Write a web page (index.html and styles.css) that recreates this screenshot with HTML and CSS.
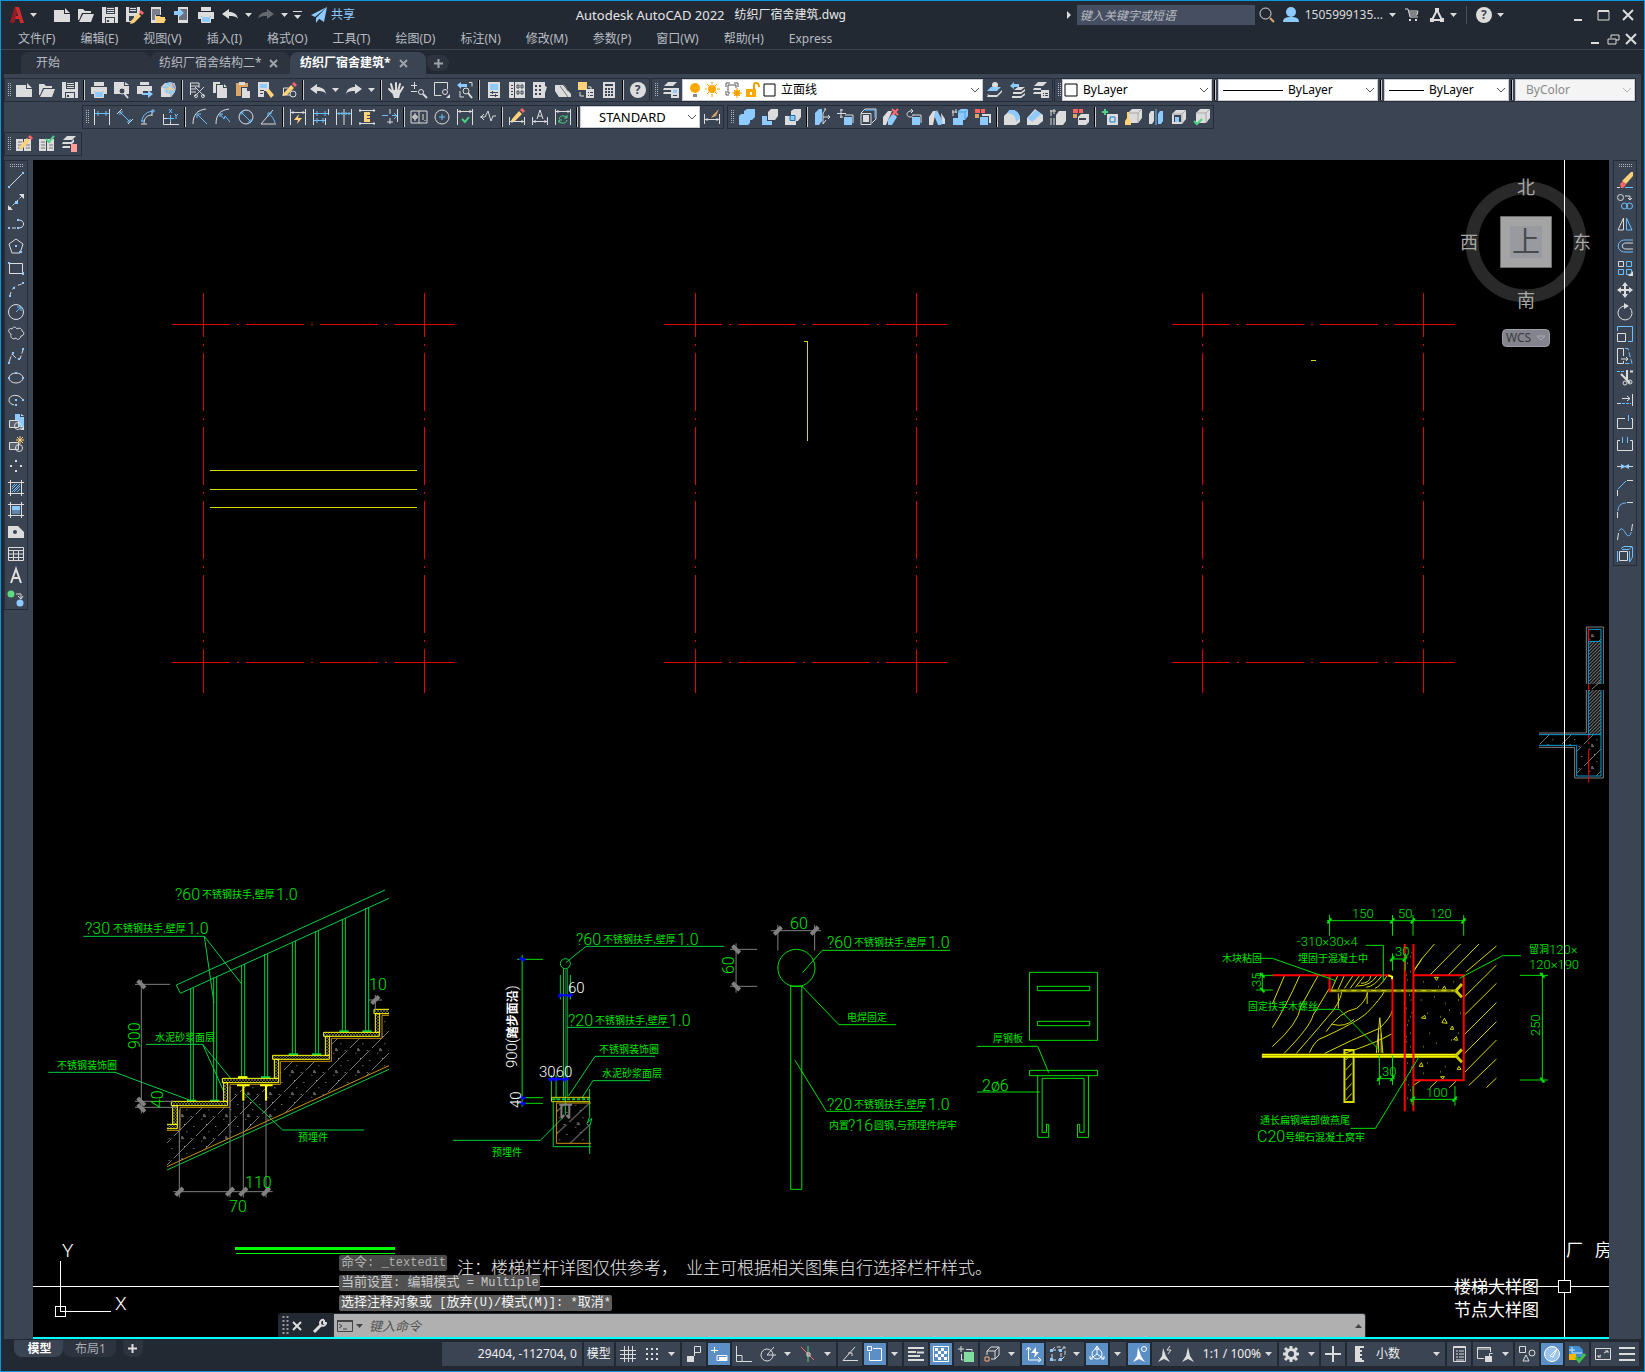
FILE: index.html
```html
<!DOCTYPE html>
<html lang="zh-CN">
<head>
<meta charset="utf-8">
<title>Autodesk AutoCAD 2022 纺织厂宿舍建筑.dwg</title>
<link rel="stylesheet" href="styles.css">
</head>
<body>
<svg class="defs" width="0" height="0" aria-hidden="true">
<defs>
<symbol id="new"><path class="fw" d="M0 3h10v4h6v8H0zM11 1l5 5h-5z"/></symbol>
<symbol id="open"><path class="fw" d="M0 2h5l2 2h6v2H4L1 13H0zM5 7h11l-3 8H1z"/></symbol>
<symbol id="save"><path class="fw" d="M0 0h16v16H0z"/><path class="dk" d="M4 0h9v7H4zM3 10h10v6H3z"/><path class="fw" d="M5 1h7v1H5zM5 3h7v1H5zM5 5h7v1H5zM4 11h8v5H4z"/><path class="dk" d="M5 13h2v2H5z"/></symbol>
<symbol id="print"><path class="fw" d="M3 0h10v4H3zM0 5h16v7h-3V9H3v3H0z"/><path class="fb" d="M4 10h8v5H4z"/><path d="M3.500 9.500h9v6h-9z"/></symbol>
<symbol id="undo"><path class="fw" d="M0 7l7-5v3c5 0 8 2 9 7-2-3-5-3-9-3v3z"/></symbol>
<symbol id="redo"><path class="fw" d="M16 7L9 2v3C4 5 1 7 0 12c2-3 5-3 9-3v3z"/></symbol>
<symbol id="caret"><path class="fw" d="M0 0h7L3.500 4z"/></symbol>
<symbol id="chev"><path d="M1 1l4 4 4-4" stroke="#555"/></symbol>
<symbol id="pencil"><path class="fy" d="M1 11l7-8 3 3-7 7-4 1z"/><path class="fr" d="M9 2l2-2 3 3-2 2z"/></symbol>
<symbol id="cube"><path class="fw" d="M1 5l4-4h10v9l-4 5H1z"/><path d="M1 5h10v10M11 5l4-4" stroke="#a8a8a8"/></symbol>
<symbol id="x"><path d="M1 1l10 10M11 1L1 11" stroke-width="2"/></symbol>
<pattern id="concrete" width="66" height="66" patternUnits="userSpaceOnUse"><path d="M-4 70L70-4M-37 37L37-37M29 103L103 29" stroke="#747474" stroke-width="3" fill="none" stroke-dasharray="80 10"/><path d="M10 20h3v3h-3zM52 42h3v3h-3zM31 58h3v3h-3zM44 12h3v3h-3zM24 36h3v3h-3z" fill="#999" stroke="none"/><path d="M18 6l6 8h-8z" stroke="#777" stroke-width="2" fill="#555"/></pattern>
<pattern id="mortar" width="9" height="9" patternUnits="userSpaceOnUse"><path d="M0 9L9 0M0 0l9 9" stroke="#77775c" stroke-width="2"/></pattern>
<pattern id="fine" width="10" height="10" patternUnits="userSpaceOnUse"><path d="M-2 12L12-2M-2 2L2-2M8 12l4-4" stroke="#8c8c8c" stroke-width="3"/></pattern>
</defs>
</svg>

<header>
<div class="titlebar">
<div class="quick">
<button class="logo" aria-label="应用程序菜单"><svg class="i"><path d="M1 16L6 0h4l5 16h-4l-1-4H6l-1 4zM7 9h2L8 4z" fill="#d12a2f" stroke="none"/><path d="M1 16L6 0l2 4-3 12z" fill="#8e1c20" stroke="none"/></svg><svg class="caret"><use href="#caret"/></svg></button>
<button aria-label="新建"><svg class="i"><use href="#new"/></svg></button>
<button aria-label="打开"><svg class="i"><use href="#open"/></svg></button>
<button aria-label="保存"><svg class="i"><use href="#save"/></svg></button>
<button aria-label="另存为"><svg class="i"><path class="fw" d="M0 0h14v6l-6 7v2H0z"/><path class="dk" d="M3 0h8v6H3zM3 9h5v5H3z"/><path class="fw" d="M4 1h6v1H4zM4 3h6v1H4z"/><use href="#pencil" x="4" y="3"/></svg></button>
<button aria-label="从移动设备打开"><svg class="i"><path class="fw" d="M1 0h10v8H6v8H1z"/><path class="dk" d="M2 2h8v6H5v5H2z" fill-opacity=".6"/><path class="fy" d="M6 9h4l1 1h4v2h-5l-2 4H6zM10 12h6l-2 4H8z"/></svg></button>
<button aria-label="保存到移动设备"><svg class="i"><path class="fw" d="M4 0h10v16H4z"/><path class="dk" d="M5 2h8v11H5z" fill-opacity=".7"/><path class="fb" d="M0 4h5V1l5 5-5 4V8H0z"/></svg></button>
<button aria-label="打印"><svg class="i"><use href="#print"/></svg></button>
<button aria-label="放弃"><svg class="i"><use href="#undo"/></svg></button>
<button class="drop" aria-label="放弃列表"><svg class="caret"><use href="#caret"/></svg></button>
<button class="dim" aria-label="重做"><svg class="i"><use href="#redo"/></svg></button>
<button class="drop" aria-label="重做列表"><svg class="caret"><use href="#caret"/></svg></button>
<button class="custom" aria-label="自定义快速访问工具栏"><svg class="more"><path class="fw" d="M0 0h9v1H0zM1 4h7L4.500 8z"/></svg></button>
<button class="share"><svg class="i"><path class="fb" d="M16 0L0 8l4 2zM16 0L5 11v5l3-4zM16 0L7 11l6 4z"/></svg>共享</button>
</div>
<h1><span class="app">Autodesk AutoCAD 2022</span><span>纺织厂宿舍建筑.dwg</span></h1>
<div class="account">
<svg class="play"><path class="fw" d="M0 0l4 4-4 4z"/></svg>
<input type="search" aria-label="搜索" placeholder="键入关键字或短语">
<button aria-label="搜索"><svg class="i"><circle cx="6.500" cy="6.500" r="5.500"/><path d="M11 11l4 4" stroke="#d9a566" stroke-width="2"/></svg></button>
<button class="user"><svg class="i"><circle class="fb" cx="8" cy="5" r="5"/><path class="fb" d="M0 15c0-4 3-5 8-5s8 1 8 5z"/></svg>1505999135...<svg class="caret"><use href="#caret"/></svg></button>
<button class="cart" aria-label="应用商店"><svg class="i"><path d="M1 2h3l2 8h8M5 4h9l-1 4H6M5 6h9"/><path class="fw" d="M5 12h2v2H5zM11 12h2v2h-2z"/></svg></button>
<button class="wide" aria-label="保持连接"><svg class="i"><path d="M8 3L3 13h10zM8 3v1" stroke-width="2"/><path class="fw" d="M6 1h4v4H6zM1 11h4v4H1zM11 11h4v4h-4z"/></svg><svg class="caret"><use href="#caret"/></svg></button>
<span class="rule"></span>
<button class="wide" aria-label="帮助"><span class="help">?</span><svg class="caret"><use href="#caret"/></svg></button>
<div class="winctl">
<button aria-label="最小化"><svg><path d="M2 11h8" stroke-width="2"/></svg></button>
<button aria-label="最大化"><svg><path d="M1 2h11M1 2v9h11V2" stroke-width="1"/><path d="M1 2h11" stroke-width="2"/></svg></button>
<button aria-label="关闭"><svg><use href="#x"/></svg></button>
</div>
</div>
</div>
<nav class="menubar" aria-label="菜单">
<a href="#">文件(F)</a><a href="#">编辑(E)</a><a href="#">视图(V)</a><a href="#">插入(I)</a><a href="#">格式(O)</a><a href="#">工具(T)</a><a href="#">绘图(D)</a><a href="#">标注(N)</a><a href="#">修改(M)</a><a href="#">参数(P)</a><a href="#">窗口(W)</a><a href="#">帮助(H)</a><a href="#">Express</a>
<div class="docctl">
<button aria-label="最小化文档"><svg><path d="M2 10h8" stroke-width="2"/></svg></button>
<button aria-label="还原文档"><svg><path d="M1 6h8v5H1zM4 5V2h8v5H9"/></svg></button>
<button aria-label="关闭文档"><svg><use href="#x"/></svg></button>
</div>
</nav>
<div class="filetabs">
<div class="tab start"><button>开始</button></div>
<div class="tab"><button>纺织厂宿舍结构二*</button><button class="close" aria-label="关闭"><svg><path d="M1 1l7 7M8 1L1 8" stroke-width="2"/></svg></button></div>
<div class="tab on"><button>纺织厂宿舍建筑*</button><button class="close" aria-label="关闭"><svg><path d="M1 1l7 7M8 1L1 8" stroke-width="2"/></svg></button></div>
<button class="add" aria-label="新图形"><svg><path d="M4.500 0v9M0 4.500h9" stroke-width="2"/></svg></button>
</div>
</header>

<section class="bars">
<div class="barrow">
<div class="bar">
<i class="grip"></i>
<button aria-label="新建"><svg class="i"><use href="#new"/></svg></button>
<button aria-label="打开"><svg class="i"><use href="#open"/></svg></button>
<button aria-label="保存"><svg class="i"><use href="#save"/></svg></button>
<i class="sep"></i>
<button aria-label="打印"><svg class="i"><use href="#print"/></svg></button>
<button aria-label="预览"><svg class="i"><path class="fw" d="M0 0h10v4h5v8H0zM11 0l4 3h-4z"/><circle cx="8" cy="9" r="3" fill="#3b4453"/><path d="M10 11l4 5" stroke-width="2"/></svg></button>
<button aria-label="发布"><svg class="i"><path class="fw" d="M3 0h9v3H3zM0 4h15v5H6v3H0z"/><path class="fb" d="M5 11h6V8l5 4-5 4v-3H5z"/></svg></button>
<button aria-label="三维打印"><svg class="i"><use href="#cube"/><circle class="fb" cx="10" cy="6" r="6"/><path d="M6 3l8 6M12 1L8 11M4 7h11" stroke="#ffd27a"/><path d="M12 1l3 6" stroke="#f66"/></svg></button>
<i class="sep"></i>
<button aria-label="剪切"><svg class="i"><path d="M1 1h9M1 4h9M1 7h6M1 10h6M1.500 1v12M10 1v5"/><path d="M6 5l9 9M15 5l-9 9"/><circle cx="7" cy="14" r="1.500"/><circle cx="14" cy="14" r="1.500"/></svg></button>
<button aria-label="复制"><svg class="i"><path class="fw" d="M1 0h7v2H4v9H1zM5 3h6v3h4v10H5zM12 2l3 3h-3z"/></svg></button>
<button aria-label="粘贴"><svg class="i"><path class="fo" d="M1 1h12v4H6v9H1z"/><path class="fw" d="M4 0h6v3H4zM7 6h5v3h3v7H7z"/></svg></button>
<button aria-label="特性匹配"><svg class="i"><path class="fw" d="M0 0h11v9H6v6H0z"/><path class="fb" d="M2 2h7v4H2z"/><path class="dk" d="M2 8h4v1H2zM2 11h3v1H2z"/><path class="fy" d="M8 9l3-2 5 6-3 3z"/></svg></button>
<button aria-label="块编辑器"><svg class="i"><path d="M1 13h8M2.500 13V6h5"/><circle cx="12" cy="12" r="3"/><use href="#pencil" x="2" y="0"/></svg></button>
<i class="sep"></i>
<button aria-label="放弃"><svg class="i"><use href="#undo"/></svg></button>
<button class="drop" aria-label="放弃列表"><svg class="caret"><use href="#caret"/></svg></button>
<button aria-label="重做"><svg class="i"><use href="#redo"/></svg></button>
<button class="drop" aria-label="重做列表"><svg class="caret"><use href="#caret"/></svg></button>
<i class="sep"></i>
<button aria-label="平移"><svg class="i"><path d="M4 10L1 7M5 9L3 2M8 8V1M10 9l2-7M12 10l3-5" stroke-width="2" stroke-linecap="round"/><path class="fw" d="M3 8h10l-2 8H6z"/></svg></button>
<button aria-label="实时缩放"><svg class="i"><path d="M0 3.500h6M3.500 0v7M0 9.500h6"/><circle cx="10" cy="10" r="2.500"/><path d="M12 12l4 4" stroke-width="2"/></svg></button>
<button aria-label="窗口缩放"><svg class="i"><path d="M.5.500h13v7M.5.500v13h7"/><circle cx="11" cy="10" r="2.500"/><path class="fw" d="M16 12v4h-4z"/></svg></button>
<button aria-label="缩放上一个"><svg class="i"><path class="fb" d="M0 3l4-3v2h6v3H4v2z"/><path d="M12 .5h3v4M3 9v6h4"/><circle cx="9" cy="9" r="3"/><path d="M11 11l4 5" stroke-width="2"/></svg></button>
<i class="sep"></i>
<button aria-label="特性"><svg class="i"><path class="fw" d="M2 0h12v16H2z"/><path class="fb" d="M4 2h8v6H4z"/><path class="dk" d="M4 10h8v1H4zM4 13h8v1H4zM6 9h1v3H6zM9 12h1v3H9z"/></svg></button>
<button aria-label="设计中心"><svg class="i"><path class="fw" d="M0 0h16v16H0z"/><path class="dk" d="M5 0h1v16H5zM2 3h2v1H2zM2 6h2v1H2zM2 9h2v1H2zM2 12h2v1H2z"/><path d="M8 3h2v3H8zM12 3h2v3h-2zM8 9h2v3H8zM12 9h2v3h-2z" stroke="#3b4453"/></svg></button>
<button aria-label="工具选项板"><svg class="i"><path class="fw" d="M1 0h12v4l2 1-2 6v5H1z"/><path class="dk" d="M3 3h2v2H3zM7 3h2v2H7zM3 7h2v2H3zM7 7h2v2H7zM3 11h2v2H3zM7 11h2v2H7z"/></svg></button>
<button aria-label="图纸集"><svg class="i"><path class="fw" d="M0 3h8l8 9v3H4L0 9z"/><path d="M5 4l8 11M8 3c4 0 2 4 5 6" stroke="#777"/></svg></button>
<button aria-label="标记集"><svg class="i"><path class="fy" d="M0 0h9v8H0z"/><path d="M2 10v4h4M10 5h3v3"/><path class="fw" d="M8 7h8v9H8z"/><path class="dk" d="M10 10h1v1h-1zM12 10h3v1h-3zM10 13h1v1h-1zM12 13h3v1h-3z"/></svg></button>
<button aria-label="计算器"><svg class="i"><path class="fw" d="M2 0h12v16H2z"/><path class="dk" d="M4 2h8v2H4zM4 6h2v2H4zM7 6h2v2H7zM10 6h2v2h-2zM4 9h2v2H4zM7 9h2v2H7zM10 9h2v2h-2zM4 12h2v2H4zM7 12h2v2H7zM10 12h2v2h-2z"/></svg></button>
<i class="sep"></i>
<button aria-label="帮助"><span class="help">?</span></button>
</div>
<div class="bar">
<i class="grip"></i>
<button aria-label="图层特性"><svg class="i"><path class="fw" d="M5 0h9l-4 4H1zM1 6h7v2H0zM1 10h7v2H0zM8 6h8v10H8z"/><path class="fb" d="M10 8h4v3h-4z"/><path class="dk" d="M10 13h4v1h-4z"/></svg></button>
<label class="combo layer"><svg class="lay" aria-hidden="true"><circle cx="8" cy="6" r="5" fill="#ffa800"/><path d="M6 12h4v3H6z" fill="#888"/><circle cx="25" cy="7" r="4" fill="#ffa800"/><path d="M25 0v2M25 12v3M18 7h2M30 7h3M20 2l2 2M28 10l2 2M30 2l-2 2M22 10l-2 2" stroke="#ffa800"/><path d="M39 5V1h4M47 1h4v4M39 9v4h3M41 3h8v3M41 3v8h2" stroke="#555"/><circle cx="50" cy="11" r="3" fill="#ffa800"/><path d="M50 6v10M45 11h10M47 8l6 6M53 8l-6 6" stroke="#ffa800"/><path d="M59 7h10v8H59z" fill="#ffa800"/><path d="M67 7V3q0-2 2-2 3 0 3 4" stroke="#e09600" stroke-width="2"/><path d="M63 10h2v3h-2z" fill="#fff"/><path d="M77 2h11v12H77z" stroke="#000" stroke-width="1"/></svg><select aria-label="图层"><option>立面线</option></select><svg class="cv"><use href="#chev"/></svg></label>
<button aria-label="置为当前图层"><svg class="i"><circle class="fw" cx="8" cy="3" r="3"/><path class="fb" d="M4 5h10l-4 4H0z"/><path class="fw" d="M2 11l-2 2h10l5-5v2l-5 5H0"/></svg></button>
<button aria-label="上一个图层"><svg class="i"><path class="fb" d="M0 4l4-4v2h5v3H4v2z"/><path class="fw" d="M8 5h7l-4 3H4zM3 10h8l4-3v2l-4 3H3zM2 14h9l4-3v2l-4 3H2z"/></svg></button>
<button aria-label="图层状态"><svg class="i"><path class="fw" d="M5 0h9l-4 4H1zM1 6h7v2H0zM1 10h7v2H0zM8 8h8v8H8z"/><path class="dk" d="M10 11h1v1h-1zM12 11h3v1h-3zM10 13h1v1h-1zM12 13h3v1h-3z"/></svg></button>
</div>
<div class="bar grow">
<i class="grip"></i>
<label class="combo c1"><svg class="sw"><path d="M1 2h12v12H1z" stroke="#000"/></svg><select aria-label="颜色"><option>ByLayer</option></select><svg class="cv"><use href="#chev"/></svg></label>
<i class="sep"></i>
<label class="combo c2"><svg class="ln"><path d="M0 8.500h60" stroke="#000"/></svg><select aria-label="线型"><option>ByLayer</option></select><svg class="cv"><use href="#chev"/></svg></label>
<i class="sep"></i>
<label class="combo c3"><svg class="ln short"><path d="M0 8.500h35" stroke="#000"/></svg><select aria-label="线宽"><option>ByLayer</option></select><svg class="cv"><use href="#chev"/></svg></label>
<i class="sep"></i>
<label class="combo c4 off"><select aria-label="打印样式" disabled><option>ByColor</option></select><svg class="cv"><use href="#chev"/></svg></label>
</div>
</div>

<div class="barrow second">
<div class="bar">
<i class="grip"></i>
<button aria-label="线性"><svg class="i"><path d="M.5 0v16M15.500 0v16"/><path class="b" d="M1 4.500h14M4 2v5M12 2v5"/></svg></button>
<button aria-label="对齐"><svg class="i"><path d="M0 5l5-5M11 15l5-5"/><path class="b" d="M3 3l10 10M3 3h3M3 3v3M13 13h-3M13 13v-3"/></svg></button>
<button aria-label="弧长"><svg class="i"><path d="M1 15h6M12 1v6M4 15C4 9 7 6 12 6"/><path class="b" d="M2 13C2 6 7 2 15 2M1 12h3M13 0v4"/></svg></button>
<button aria-label="坐标"><svg class="i"><path d="M.5 5v10.500H16M1 9.500h9M7.500 8v7"/><path class="b" d="M7.500 6v7M4 9.500h7M6 0l3 4M9 0L6 4M12 5l1 2 2-2M13 7v3"/></svg></button>
<i class="sep"></i>
<button aria-label="半径"><svg class="i"><path d="M14 0C5 1 1 6 1 15"/><path class="b" d="M6 6l9 9M5 5h4M5 5v4"/></svg></button>
<button aria-label="折弯"><svg class="i"><path d="M14 0C5 1 1 6 1 15"/><path class="b" d="M5 5l4 5 1-3 5 6M5 5h3M5 5v3"/></svg></button>
<button aria-label="直径"><svg class="i"><circle cx="8" cy="8" r="7"/><path class="b" d="M3 3l10 10M3 3h3M3 3v3M13 13h-3M13 13v-3"/></svg></button>
<button aria-label="角度"><svg class="i"><path d="M12 1L0 15h15"/><path class="b" d="M8 5c3 2 5 5 6 9M7 8V4h4"/></svg></button>
<i class="sep"></i>
<button aria-label="快速标注"><svg class="i"><path d="M.5 0v16M15.500 0v16M1 3.500h14M3 2v3M13 2v3"/><path class="fy" d="M9 5l-5 6h4l-1 4 5-6H8z"/></svg></button>
<button aria-label="基线"><svg class="i"><path d="M.5 0v16M15.500 0v6M12.500 9v7"/><path class="b" d="M1 4.500h14M1 11.500h11M4 2v5M12 2v5M4 9v5M10 9v5"/></svg></button>
<button aria-label="连续"><svg class="i"><path d="M.5 0v16M8 0v16M15.500 0v16"/><path class="b" d="M1 4.500h14M3 3v3M6 3v3M10 3v3M13 3v3"/></svg></button>
<button aria-label="等距标注"><svg class="i"><path d="M0 1.500h16M0 14.500h16M1 0v3M15 0v3M1 13v3M15 13v3"/><path d="M5 3h6v3H8v1h3v2H8v1h3v3H5z" class="fy"/></svg></button>
<button aria-label="标注打断"><svg class="i"><path d="M8 0v5M8 9v6M5 13h6"/><path class="b" d="M0 6.500h6M10 6.500h6M12 4l3 3-3 3"/><path d="M15.500 0v13"/></svg></button>
<i class="sep"></i>
<button aria-label="公差"><svg class="i"><path d="M0 2h16v12H0zM8 2v12M4 4v8M1 8h6M12 5v6M14 11v1"/><circle cx="4" cy="8" r="2"/></svg></button>
<button aria-label="圆心标记"><svg class="i"><circle cx="8" cy="8" r="7"/><path class="b" d="M8 5v6M5 8h6"/></svg></button>
<button aria-label="检验"><svg class="i"><path d="M.5 0v16M15.500 0v16M1 2.500h14M3 1v3M13 1v3"/><path d="M5 10l3 3 4-5" stroke="#4bd383" stroke-width="2"/></svg></button>
<button aria-label="折弯线性"><svg class="i"><path d="M0 8h5l3-6 3 10 2-5h3M4 5L1 8l3 3"/></svg></button>
<i class="sep"></i>
<button aria-label="编辑标注"><svg class="i"><path d="M.5 8v8M15.500 8v8M1 12.500h14M3 11v3M13 11v3"/><use href="#pencil" x="2" y="-1"/></svg></button>
<button aria-label="编辑标注文字"><svg class="i"><path d="M.5 8v8M15.500 8v8M1 12.500h14M3 11v3M13 11v3M5 10l3-9 3 9M6 7h4"/></svg></button>
<button aria-label="标注更新"><svg class="i"><path d="M.5 0v16M15.500 0v16M1 2.500h14M3 1v3M13 1v3"/><path d="M4 10c1-4 6-4 8-1M12 11c-1 4-6 4-8 1M12 6v3H9M4 14v-3h3" stroke="#4bd383"/></svg></button>
<i class="sep"></i>
<label class="combo std"><select aria-label="标注样式"><option>STANDARD</option></select><svg class="cv"><use href="#chev"/></svg></label>
<button aria-label="标注样式管理"><svg class="i"><path d="M.5 5v10M15.500 5v10M1 10.500h14M3 9v3M13 9v3"/><path class="fo" d="M9 6l6-6-3 7-5 2z"/></svg></button>
</div>
<div class="bar">
<i class="grip"></i>
<button aria-label="并集"><svg class="i"><path class="fb" d="M0 7l2-2h3V2l3-2h8v8l-3 3h-2v3l-2 2H0z"/></svg></button>
<button aria-label="差集"><svg class="i"><path class="fb" d="M0 7h5v5h5v4H0z"/><path class="fw" d="M6 3l3-3h7v7l-3 4H6z"/></svg></button>
<button aria-label="交集"><svg class="i"><path class="fw" d="M6 2l3-2h7v8l-3 4h-2v4H0V7h6z"/><path d="M5 6.500h5v5H5z" fill="#8ccaff" stroke="#1d6ea8"/></svg></button>
<i class="sep"></i>
<button aria-label="拉伸面"><svg class="i"><path class="fb" d="M1 4l4-4h3v12l-3 4H1z"/><path d="M10 0h2L9 4v11l3-4M9 8h7M14 6l2 2-2 2"/></svg></button>
<button aria-label="移动面"><svg class="i"><path d="M4 0v9M0 4.500h9M3 1h3M3 8h3"/><path class="fb" d="M7 8h8v8H7z"/><path d="M8 6h8v8"/></svg></button>
<button aria-label="偏移面"><svg class="i"><path d="M1 4.500h10v11H1zM1 4l4-4h11v10l-4 4"/><path class="fw" d="M3 6h6v7H3z"/><path class="b" d="M5 1h10v8"/></svg></button>
<button aria-label="删除面"><svg class="i"><path class="fw" d="M0 8l5-6h4L3 16H0z"/><path class="fb" d="M5 11l5-7 4 4-5 8H5z"/><path d="M9 0l6 6M15 0L9 6" stroke="#ff6a6a" stroke-width="2"/></svg></button>
<button aria-label="旋转面"><svg class="i"><path d="M6 2H4C0 3 0 8 4 8c3 0 3-2 3-3M5 0l2 2-2 2"/><path class="fb" d="M6 8h8v8H6z"/><path d="M7 6h8v8"/></svg></button>
<button aria-label="倾斜面"><svg class="i"><path class="fw" d="M0 8l4-6h3L4 16H0zM12 4l4 6v5h-3z"/><path class="fb" d="M5 6l3-5 6 12-2 3H9z"/></svg></button>
<button aria-label="复制面"><svg class="i"><path d="M4 0v4M0 3h5M1 1v6"/><path class="fb" d="M1 9h10v7H1zM6 2l3-2h7v7l-3 4H6z"/><path d="M6 3h7v7M13 3l3-3" stroke="#4b9bd8"/></svg></button>
<button aria-label="着色面"><svg class="i"><path class="fr" d="M0 0h5v4H0zM6 0h4v4H6z"/><path class="fo" d="M0 5h4v4H0z"/><path class="fb" d="M5 8h8v8H5z"/><path class="fw" d="M7 5h9v9h-2V7H7z"/></svg></button>
<i class="sep"></i>
<button aria-label="圆角边"><svg class="i"><path class="fw" d="M0 7l6-6h3c5 1 7 5 7 9v3l-4 3H0z"/><path class="fb" d="M5 1h5c4 2 6 5 6 8l-4 4c0-5-2-8-8-9z"/></svg></button>
<button aria-label="倒角边"><svg class="i"><path class="fw" d="M0 9l8-9 8 6v6l-5 4H0z"/><path class="fb" d="M1 9l8-8 5 4-9 8z"/></svg></button>
<button aria-label="压印边"><svg class="i"><path d="M1 1v6M0 2h6M4 0v5M1 9v7M4 9v7"/><path class="fw" d="M6 6l3-4h7v10l-3 4H6z"/></svg></button>
<button aria-label="着色边"><svg class="i"><path class="fr" d="M0 0h5v4H0zM6 0h4v4H6z"/><path class="fo" d="M0 5h4v4H0z"/><path class="fw" d="M5 8l3-3h8v8l-3 3H5z"/><path d="M6 10h7" stroke="#3b4453" stroke-width="2"/></svg></button>
<i class="sep"></i>
<button aria-label="压印"><svg class="i"><path d="M3 0v6M0 3h6" stroke="#4bd383" stroke-width="2"/><path class="fw" d="M5 5h11v11H5z"/><path d="M8 8h5v5H8z" stroke="#1583d6"/></svg></button>
<button aria-label="清除"><svg class="i"><use href="#cube" x="2" y="-1"/><path class="fy" d="M2 3h2v6l2 3v4H0v-4l2-3z"/></svg></button>
<button aria-label="分割"><svg class="i"><path class="fw" d="M1 5l2-3h3v10l-2 3H1z"/><path class="fb" d="M10 5l2-3h3v10l-2 3h-3z"/><path class="b" d="M8 0v16"/></svg></button>
<button aria-label="抽壳"><svg class="i"><use href="#cube"/><path class="dk" d="M3 6h7v7H3z"/><path class="fb" d="M4 8h4v5H4z"/></svg></button>
<button aria-label="检查"><svg class="i"><use href="#cube" x="1" y="-1"/><path d="M0 12l3 3 5-5" stroke="#4bd383" stroke-width="2"/></svg></button>
</div>
</div>

<div class="barrow">
<div class="bar">
<i class="grip"></i>
<button aria-label="编辑参照"><svg class="i"><path class="fw" d="M0 3h7v12H0zM8 3h7v12H8z"/><path d="M2 6h4M2 9h4M2 12h4M10 9h4M10 12h4" stroke="#777"/><use href="#pencil" x="3" y="-1"/></svg></button>
<button aria-label="保存参照编辑"><svg class="i"><path class="fw" d="M0 3h7v12H0zM8 3h7v12H8z"/><path d="M2 6h4M2 9h4M2 12h4M10 9h4M10 12h4" stroke="#777"/><path d="M7 3l3 3 5-6" stroke="#4bd383" stroke-width="2"/></svg></button>
<button aria-label="图层合并"><svg class="i"><path class="fw" d="M5 0h9l-4 4H1zM1 6h8l3-3v3l-2 2H0zM1 10h7v2H0z"/><path d="M9 8h6v8H9z" fill="#ff9b9b" stroke="none"/></svg></button>
</div>
</div>
</section>

<main>
<aside class="side">
<div class="vbar">
<i class="hgrip"></i>
<button aria-label="直线"><svg class="i"><path d="M2 14L14 2"/><path class="fb" d="M0 14h2v2H0zM14 0h2v2h-2z"/></svg></button>
<button aria-label="构造线"><svg class="i"><path d="M1 15L15 1" stroke-dasharray="3 2"/><path class="fw" d="M16 0v5l-5-5zM0 16v-5l5 5z"/><path class="fb" d="M7 7h3v3H7z"/></svg></button>
<button aria-label="多段线"><svg class="i"><path d="M4 12h4M11 12c6 0 6-8 0-8"/><path class="fb" d="M0 11h2v2H0zM9 3h2v2H9zM9 11h2v2H9z"/></svg></button>
<button aria-label="多边形"><svg class="i"><path d="M8 1l7 5-3 9H4L1 6z"/><path class="fb" d="M7 7h2v2H7zM11 13h3v2h-3z"/></svg></button>
<button aria-label="矩形"><svg class="i"><path d="M1.500 3.500h13v10h-13z"/><path class="fb" d="M0 2h2v2H0zM14 12h2v3h-2z"/></svg></button>
<button aria-label="圆弧"><svg class="i"><path d="M2 14C3 7 7 3 15 2" stroke-dasharray="4 3"/><path class="fb" d="M1 13h2v2H1zM5 5h2v2H5zM14 0h2v2h-2z"/></svg></button>
<button aria-label="圆"><svg class="i"><circle cx="8" cy="8" r="7.500"/><path class="b" d="M8 8l5-5M9 3h4v4"/></svg></button>
<button aria-label="修订云线"><svg class="i"><path d="M3 8C-1 6 1 1 4 3c1-3 4-2 5 0 3-2 5 0 5 2 3 1 2 5-1 5-1 4-4 4-5 2-3 2-6 0-5-4z"/></svg></button>
<button aria-label="样条曲线"><svg class="i"><path d="M1 14l3-8 4 4 4 1 3-9" stroke-dasharray="6 2"/><path class="fb" d="M0 14h2v2H0zM4 4h2v2H4zM10 10h2v2h-2zM14 0h2v2h-2z"/></svg></button>
<button aria-label="椭圆"><svg class="i"><ellipse cx="8" cy="8" rx="7" ry="5"/><path class="fb" d="M0 7h2v2H0zM14 7h2v2h-2zM7 2h2v2H7z"/></svg></button>
<button aria-label="椭圆弧"><svg class="i"><path d="M14 7C12 2 1 2 1 8c0 3 2 4 5 5"/><path class="fb" d="M7 7h2v2H7zM14 7h2v2h-2zM7 12h2v2H7z"/></svg></button>
<button aria-label="插入块"><svg class="i"><path class="fb" d="M7 0h5v3h4v10H7z"/><path d="M1.500 6.500h9v7h-9z" fill="#5a6270"/><circle cx="10" cy="12" r="3.500"/><path class="fw" d="M16 12v4h-4zM13 0l3 2h-3z"/></svg></button>
<button aria-label="创建块"><svg class="i"><path d="M1.500 6.500h9v7h-9z" fill="#5a6270"/><circle cx="11" cy="12" r="3.500"/><path d="M12 0v8M8 4h8M9 1l6 6M15 1L9 7" stroke="#ffd27a"/></svg></button>
<button aria-label="点"><svg class="i"><path class="fw" d="M7 2h2v2H7zM2 7h2v2H2zM12 7h2v2h-2zM7 12h2v2H7z"/></svg></button>
<button aria-label="图案填充"><svg class="i"><path d="M2.500 0v16M13.500 0v16M0 2.500h16M0 13.500h16"/><path class="b" d="M4 7l3-3M4 12l8-8M9 12l3-3M4 9l5-5M6 12l6-6"/></svg></button>
<button aria-label="渐变色"><svg class="i"><path d="M2.500 0v16M13.500 0v16M0 2.500h16M0 13.500h16"/><path class="fb" d="M4 4h8v4H4z"/><path class="fb" d="M4 8h8v4H4z" fill-opacity=".5"/></svg></button>
<button aria-label="面域"><svg class="i"><path class="fw" fill-rule="evenodd" d="M0 2h10l6 6v6H0zM7 6a2 2 0 100 4 2 2 0 000-4z"/></svg></button>
<button aria-label="表格"><svg class="i"><path d="M.5 1.500h15v13H.5zM1 4.500h14M1 8h14M1 11.500h14M5.500 4v10M10.500 4v10"/></svg></button>
<button aria-label="多行文字"><svg class="i"><path d="M3 15L8 1l5 14M4 10h8" stroke-width="2"/></svg></button>
<button aria-label="添加选定对象"><svg class="i"><circle cx="3" cy="4" r="3.500" fill="#5fd882" stroke="none"/><circle class="fb" cx="12" cy="13" r="3.500"/><path d="M8 4h5v4M10 6l3 3 2-3"/></svg></button>
</div>
</aside>

<section class="canvas" aria-label="绘图区">
<svg class="drawing">
<g class="red">
<path d="M170 133v400M391 133v400M662 133v400M883 133v400M1169 133v400M1390 133v400" stroke-dashoffset="14"/>
<path d="M139 164h284M139 502h284M631 164h284M631 502h284M1139 164h284M1139 502h284M418 164h4M418 502h4M910 164h4M910 502h4M1418 164h4M1418 502h4"/>
</g>
<path class="yl crisp" d="M177 310.500h207M177 329.500h207M177 347.500h207M774.500 181v100M771 181.500h4M1278 200.500h5"/>

<svg class="sheet s1" x="-33" y="710" viewBox="0 0 1260 1140" preserveAspectRatio="none">
<path d="M501 781H540V712H690V643H841V574H994V505H1146V436H1167V587L501 890z" fill="url(#concrete)"/>
<g class="g"><path d="M1155 60L529 345l12 25L1167 85"/>
<path d="M572 355V692M580 352V692M641 322V690M650 320V690M725 285V622M734 282V622M794 252V622M803 250V622M877 217V552M886 213V552M947 184V550M955 180V550M1027 149V482M1036 145V482M1097 114V482M1106 112V482"/>
<path d="M250 199H613L725 342M613 199L642 400M438 523H608L692 625M608 523L673 668M145 607H345L568 690M730 668L848 780H1092M501 900L1167 598"/>
<path d="M561 692h28M630 692h28M714 622h28M783 622h28M866 553h28M936 553h28M1018 484h28M1087 484h28" stroke-width="2"/></g>
<path class="br" d="M501 781H540V712H690V643H841V574H994V505H1146V436H1167M501 890L1167 587"/>
<g class="ys"><path d="M514 694h169v13H514zM518 707h14v56h-14zM501 763h31v13h-31M667 625h169v13H667zM671 638h12v56h-12zM818 556h170v12H818zM823 568h13v57h-13zM971 487h167v12H971zM976 499h12v57h-12zM1167 418h-45v13h45M1126 431h13v56h-13z" fill="url(#mortar)"/>
<path d="M711 646h38M730 646v46M780 646h38M798 646v46M714 622h28" stroke-width="2"/></g>
<g class="gy"><path d="M424 330V730M405 343H510M405 694H520M405 712H530M520 965H818M538 720V982M690 650V982M730 695V982M798 695V982M1126 375V420M1105 390H1146"/>
<path d="M413 332l22 22M413 684l22 22M413 703l22 22M527 976l22-22M679 976l22-22M719 976l22-22M787 976l22-22M1115 401l22-22" stroke-width="4"/></g>
</svg>

<svg class="sheet s2" x="397" y="740" viewBox="0 0 1568 900" preserveAspectRatio="none">
<path d="M354 609h94v121h-94z" fill="url(#concrete)"/>
<g class="g"><ellipse cx="379" cy="191" rx="14" ry="15"/><path d="M380 188l57-49H823M374 206V590M384 206V590M365 225V298M393 225V298M384 382H672M388 588L462 469H630M425 595L456 542H616M64 721H309L370 655M345 605V740H451M447 567V650L440 670L453 655L447 680V762M379 520V645M353 525V600M340 525V600"/>
<path d="M379 206V590" stroke="#064"/></g>
<path class="lg" d="M258 165V620M244 178H316M244 593H316M244 610H316"/>
<path class="br" d="M451 609H354V730H451"/>
<path class="yl" d="M448 592H340V605H448"/><path class="g" d="M342 598H446" stroke-dasharray="3 2" stroke-width="2"/>
<path class="gy" d="M368 614V655M390 614V655M362 614H398M368 655l8-10M390 655l-8-10" stroke-width="2"/>
<path class="bl" d="M358 286h42M330 538h60M250 178h18M250 593h18M250 610h18M361 292l9-12M388 292l9-12M336 544l9-12M349 544l9-12M374 544l9-12M253 172l10 12M253 587l10 12M253 604l10 12" stroke-width="2"/>
<g class="lg"><ellipse cx="1026" cy="204" rx="52" ry="56"/><path d="M1010 258V868H1041V258zM1043 218L1098 151H1456M1041 258L1145 374H1305M1022 481L1110 634H1378"/></g>
<g class="gy"><path d="M955 92H1095M974 75V152M1077 75V152M857 130V278M840 148H916M840 259H916"/><path d="M964 103l20-22M1067 103l20-22M847 137l20 22M847 248l20 22" stroke-width="4"/></g>
</svg>

<svg class="sheet s3" x="927" y="740" viewBox="0 0 1568 840" preserveAspectRatio="none">
<g class="yl">
<path d="M1041 207L1058 175 1086 132M1038 215l20-40M1075 226l71-94M1117 226l71-94M1159 215l69-77M1155 290l73-95M1155 345l73-95M1155 403l73-95M1155 460l73-95M1155 517l73-97M1165 556l63-79M1120 563l16-20M1076 563l16-20M1205 563l23-29M1038 556l16-14"/>
<path d="M715 312l28-86M715 383q30-60 63-157M715 440q60-70 65-120l40-94M742 460q60-80 66-114l37-80M770 460q60-90 85-130 20-40 18-55M800 458q10-30 22-40 85-50 110-80 30-40 40-65M835 460q60-40 125-75 25-30 30-55M880 460q70-30 108-58M838 395q30-60 70-70 20-20 25-47M852 373q30 10 50-15M866 325v-45M932 312v-36M850 270l15-44M865 270l15-44M880 265l20-39M893 265l22-39M905 262l20-34M918 250q20 0 22-22M910 258q30 0 45-32M930 262q20-4 36-36M950 265q12-6 28-38"/>
<path d="M953 460L961 353L968 460M958 400V458M964 400V458"/>
<path d="M880 450h21v156h-21z" stroke-width="2"/><path d="M883 480l14-20M883 510l14-20M883 540l14-20M883 570l14-20M883 600l14-20"/>
<path d="M1060 245h1M1085 290h1M1110 310h1M1070 340h1M1120 330h1M1055 300h1M1100 350h1M1075 400h1M1125 420h1M1090 430h1M1060 440h1M1070 490h1M1110 500h1M1130 245h1M1140 300h1M1145 340h1M1140 400h1M1060 520h1M1100 515h1M1095 260h1" stroke-width="2"/>
<path d="M1022 145h1M1030 170h1M1024 190h1M1031 215h1M1023 240h1M1032 300h1M1022 325h1M1030 350h1M1024 375h1M1031 400h1M1022 410h1M1030 440h1M1024 490h1M1031 515h1M1022 540h1M1030 570h1M1024 595h1M1032 610h1M1034 158h1M1021 225h1M1028 285h1M1034 338h1M1027 362h1M1021 425h1M1033 502h1M1027 555h1" stroke-width="2"/>
<path d="M1086 232h9l-4 9zM1104 268l5-10 4 12zM1056 354l8-8 2 10zM1103 368l6-13 6 15zM1122 388l5-10 3 10zM1130 419l6-9 3 11zM1051 499l5-11 4 11zM1100 530h9l-4 7zM1138 508l4-9 5 9z"/>
</g>
<path d="M846 272H1135" stroke="#808000" stroke-width="3"/><path d="M850 272H1130" stroke="#dd0" stroke-dasharray="5 5" stroke-width="1"/>
<path d="M691 467H1135" stroke="#ff0" stroke-width="4"/><path d="M691 467H1135" stroke="#aa0"/>
<path d="M1135 272L1149 252M1135 272L1149 292M1135 467L1149 448M1135 467L1149 487" stroke="#cc0" stroke-width="3"/>
<path class="rd" d="M715 226H984M1018 132V634M1038 132V634M846 226V277M1153 226H1038V541H1153zM990 237V462"/>
<path d="M980 226l9 4v8" stroke="#ff0" stroke-width="2"/>
<g class="g2">
<path d="M159 217h156v204H159zM177 259h120v13H177zM177 364h120v13H177zM39 439H178L203 518M159 511h156v16H159zM178 527V712H203V673H198V697H188V535H284V697H274V673H269V712H294V527M39 576H182"/>
<path d="M840 62H1158M846 45V107M990 45V107M1037 45V107M1153 45V107M985 177H1022M990 160V212M1019 160V212M929 136H969V245M683 175H715L860 242M808 328H868L960 450M894 685H951L1050 472M1143 235L1242 167H1284M692 218V275M678 226H716M678 270H716M1333 218V548M1282 226H1346M1282 540H1346M1030 598H1138M1037 558V617M1133 558V617M955 536H995M960 466V555M990 466V555"/>
<path d="M841 70l9-15M985 70l9-15M1032 70l9-15M1148 70l9-15M985 184l9-15M1014 184l9-15M687 219l10 14M687 263l10 14M1328 219l10 14M1328 533l10 14M1032 605l9-15M1128 605l9-15M955 543l9-15M985 543l9-15" stroke-width="2"/>
</g>
</svg>

<svg class="sheet s4" x="1487" y="450" viewBox="0 0 375 570" preserveAspectRatio="none">
<path d="M205 94h38v128h-38zM205 240h38v134h-38z" fill="url(#fine)"/>
<path d="M57 374H243V497H170V406H57zM205 58h38v36h-38z" fill="url(#concrete)"/>
<path class="gy" d="M199 222V51H250V222M199 240V369H57M250 240V504H164V412H57M215 238l25-22"/>
<path class="cy" d="M205 222V58H243V222M205 94H243M205 240V374M243 240V498H170V406H57M57 374H243"/>
<path class="rd thin" d="M206 52V94M206 222V240M206 375V385M206 395V400M206 418V518"/>
</svg>

<path d="M202 1088.500h160" stroke="#0f0" stroke-width="3"/><path d="M203 1093.500h159" stroke="#0f0"/>

<g class="lt dg">
<text x="142" y="740">?60</text><text x="52" y="774">?30</text><text x="336" y="830">10</text><text x="212" y="1028">110</text><text x="196" y="1052">70</text>
<text x="243" y="740">1.0</text><text x="154" y="774">1.0</text>
<text transform="translate(107 889) rotate(-90)">900</text><text transform="translate(130 948) rotate(-90)">40</text>
<text x="543" y="785">?60</text><text x="644" y="785">1.0</text><text x="535" y="866">?20</text><text x="636" y="866">1.0</text>
<text x="757" y="769">60</text><text transform="translate(701 814) rotate(-90)">60</text>
<text x="794" y="788">?60</text><text x="895" y="788">1.0</text><text x="794" y="950">?20</text><text x="895" y="950">1.0</text><text x="815" y="971">?16</text>
<text x="949" y="931">2ø6</text>
<text x="1224" y="982">C20</text>
</g>
<g class="lt nd">
<text x="1319" y="758">150</text><text x="1365" y="758">50</text><text x="1397" y="758">120</text><text x="1264" y="786">-310×30×4</text><text x="1362" y="796">30</text><text x="1516" y="794">120×</text><text x="1496" y="809">120×190</text><text x="1349" y="916">30</text><text x="1393" y="937">100</text>
<text transform="translate(1228 827) rotate(-90)">35</text><text transform="translate(1507 876) rotate(-90)">250</text>
</g>
<g class="lt cn">
<text x="169" y="738">不锈钢扶手,壁厚</text><text x="80" y="772">不锈钢扶手,壁厚</text><text x="122" y="881">水泥砂浆面层</text><text x="24" y="909">不锈钢装饰圈</text><text x="265" y="981">预埋件</text>
<text x="570" y="783">不锈钢扶手,壁厚</text><text x="562" y="864">不锈钢扶手,壁厚</text><text x="566" y="893">不锈钢装饰圈</text><text x="569" y="917">水泥砂浆面层</text><text x="459" y="996">预埋件</text>
<text x="821" y="786">不锈钢扶手,壁厚</text><text x="814" y="861">电焊固定</text><text x="821" y="948">不锈钢扶手,壁厚</text><text x="796" y="969">内置</text><text x="841" y="969">圆钢,与预埋件焊牢</text>
<text x="960" y="882">厚钢板</text><text x="1189" y="802">木块粘固</text><text x="1265" y="802">埋固于混凝土中</text><text x="1496" y="793">留洞</text><text x="1215" y="850">固定扶手木螺丝</text><text x="1227" y="964">通长扁钢端部做燕尾</text><text x="1252" y="981">号细石混凝土窝牢</text>
</g>
<g class="lt wt">
<text x="535" y="833">60</text><text x="506" y="917">3060</text><text transform="translate(484 908) rotate(-90)">900(<tspan class="wb">踏步面沿</tspan>)</text><text transform="translate(488 948) rotate(-90)">40</text>
</g>
<g class="lt note">
<text x="424" y="1114">注：楼梯栏杆详图仅供参考，</text><text x="653" y="1114">业主可根据相关图集自行选择栏杆样式。</text>
</g>
<g class="lt lbl"><text x="1533" y="1096">厂</text><text x="1562" y="1096">房</text><text x="1421" y="1133">楼梯大样图</text><text x="1421" y="1156">节点大样图</text><text class="axis" x="29" y="1097">Y</text><text class="axis" x="82" y="1150">X</text></g>

<g class="white"><path d="M27.500 1101v50.500H78M22.500 1146.500h10v10h-10z"/>
<path d="M0 1126.500h1525M1538 1126.500h600M1531.500 0v1120M1531.500 1133v400M1525.500 1120.500h12v12h-12z"/></g>

<g class="cubeview">
<circle cx="1493" cy="82" r="54" stroke="#fff" stroke-opacity=".16" stroke-width="13"/>
<path d="M1467.500 56.500h51v51h-51z" fill="#a4a4a4" stroke="#6c6c6c"/><path d="M1477 66h32v32h-32z" fill="#989aa0" stroke="none"/>
<text x="1484" y="34">北</text><text x="1427" y="89">西</text><text x="1540" y="89">东</text><text x="1484" y="147">南</text>
<text class="top" x="1479" y="92">上</text>
<rect x="1469.500" y="169.500" width="47" height="17" rx="4" fill="#84848e" stroke="#a0a0a8"/>
<text class="wcs" x="1473" y="182">WCS</text><path d="M1504 176h8l-4 4z" stroke="#aaaab4"/>
</g>
</svg>

<div class="command">
<ol class="history">
<li class="h1"><b>命令</b>: _textedit</li>
<li class="h2"><b>当前设置</b>: <b>编辑模式</b> = Multiple</li>
<li class="h3"><b>选择注释对象或</b> [<b>放弃</b>(U)/<b>模式</b>(M)]: *<b>取消</b>*</li>
</ol>
<div class="cmdline">
<div class="cmdtools"><svg class="dots"><path d="M1.500 0v19M5.500 0v19" stroke-width="2" stroke-dasharray="2 2" stroke="#999"/></svg><button aria-label="关闭"><svg><path d="M1 1l8 8M9 1L1 9" stroke-width="2"/></svg></button><button aria-label="自定义"><svg class="i"><path d="M2 14l7-7" stroke-width="3"/><path d="M9 7a3 3 0 013-5M9 7a3 3 0 005-2M12 2v3h3" stroke-width="2"/></svg></button></div>
<label class="cmdinput"><svg class="prompt"><path d="M.5.500h15v11H.5z" stroke="#444"/><path d="M0 1h16" stroke="#444" stroke-width="2"/><path d="M2 4l3 2-3 2M6 9h4" stroke="#444"/><path d="M19 4h7l-3.500 4z" fill="#444" stroke="none"/></svg><input type="text" aria-label="命令" placeholder="键入命令"><svg class="up"><path d="M0 4h7L3.500 0z" fill="#444" stroke="none"/></svg></label>
</div>
</div>
</section>

<aside class="side right">
<div class="vbar">
<i class="hgrip"></i>
<button aria-label="删除"><svg class="i"><path class="fy" d="M5 9l9-9h2v4l-7 8z"/><path class="fr" d="M3 12l3-3 3 4-3 3H4z"/><path d="M0 15.500h3"/><path class="b" d="M8 15.500h8"/></svg></button>
<button aria-label="复制"><svg class="i"><circle cx="3.500" cy="3.500" r="3"/><path d="M8 2h5v4M11 4l2 2 2-2"/><g class="b"><circle cx="7.500" cy="12" r="3"/><circle cx="12.500" cy="12" r="3"/></g></svg></button>
<button aria-label="镜像"><svg class="i"><path d="M6.500 2v12H1z"/><path class="b" d="M9.500 2v12H15z"/></svg></button>
<button aria-label="偏移"><svg class="i"><path d="M16 5H9C4 5 4 11 9 11h7"/><path class="b" d="M16 2H8C-1 2-1 14 8 14h8"/></svg></button>
<button aria-label="阵列"><svg class="i"><path d="M1.500 1.500h5v5h-5z"/><path class="b" d="M9.500 1.500h5v5h-5zM1.500 9.500h5v5h-5zM9.500 9.500h5v5h-5z"/><path class="fw" d="M16 11v5h-5z"/></svg></button>
<button aria-label="移动"><svg class="i"><path d="M8 2v12M2 8h12" stroke-width="2"/><path class="fw" d="M8 0l3 4H5zM8 16l3-4H5zM0 8l4-3v6zM16 8l-4-3v6z"/></svg></button>
<button aria-label="旋转"><svg class="i"><path d="M13 4a7 7 0 11-6-2"/><path class="fw" d="M7-1l5 3-5 3z"/></svg></button>
<button aria-label="缩放"><svg class="i"><path d="M.5 7.500h8v8h-8z"/><path class="b" d="M.5 5V.5h15v15H11"/></svg></button>
<button aria-label="拉伸"><svg class="i"><path d="M6.500 8V.5h-6v15h6V13M4 11h7M9 9l2 2-2 2"/><path class="b" d="M8 .5h3l4 15H8" stroke-dasharray="5 2"/></svg></button>
<button aria-label="修剪"><svg class="i"><path class="b" d="M0 1.500h7" stroke-dasharray="3 1"/><path d="M13 1.500h3M10 0v9M4 4l9 9" stroke-width="2"/><circle cx="8" cy="13" r="2"/><circle cx="13" cy="12" r="2"/></svg></button>
<button aria-label="延伸"><svg class="i"><path d="M15.500 2v12M5 6.500h8M10 4l3 2.500L10 9M0 11.500h4"/><path class="b" d="M5 11.500h9" stroke-dasharray="3 1"/></svg></button>
<button aria-label="打断于点"><svg class="i"><path d="M8 4.500H.5v10h15v-10H14"/><path class="b" d="M11.500 1v6"/></svg></button>
<button aria-label="打断"><svg class="i"><path d="M3 4.500H.5v10h15v-10H13"/><path class="b" d="M5.500 1v6M10.500 1v6"/></svg></button>
<button aria-label="合并"><svg class="i"><path d="M0 8.500h4M12 8.500h4"/><path class="fb" d="M4 6l4 2 4-2v5L8 9l-4 2z"/></svg></button>
<button aria-label="倒角"><svg class="i"><path d="M.5 10v6M10 .5h6"/><path class="b" d="M1 9l8-8"/></svg></button>
<button aria-label="圆角"><svg class="i"><path d="M.5 10v6M10 .5h6"/><path class="b" d="M1 9c0-5 3-8 8-8"/></svg></button>
<button aria-label="光顺曲线"><svg class="i"><path d="M.5 16l1-7M15.500 0l-1 7"/><path class="b" d="M2 7c3-5 5 0 7 3s5 2 5-2"/></svg></button>
<button aria-label="分解"><svg class="i"><path d="M2.500 5.500h8v9h-8z"/><path class="b" d="M.5 5v11M4 2.500L7 .5h8l-3 3H5M12.500 5v11l3-5V1"/></svg></button>
</div>
</aside>
</main>

<footer>
<div class="layouts">
<button class="on">模型</button><button>布局1</button><button class="plus" aria-label="新建布局"><svg><path d="M4.500 0v9M0 4.500h9" stroke-width="2"/></svg></button>
</div>
<div class="status">
<div class="cell coord">29404, -112704, 0</div>
<div class="cell"><button class="txt">模型</button></div>
<div class="cell"><button aria-label="栅格"><svg class="i"><path d="M0 4.500h16M0 8.500h16M0 12.500h16M4.500 0v16M8.500 0v16M12.500 0v16"/></svg></button><button aria-label="捕捉"><svg class="i"><path d="M2 3h2M7 3h2M12 3h2M2 8h2M7 8h2M12 8h2M2 13h2M7 13h2M12 13h2" stroke-width="2"/></svg></button><button class="drop" aria-label="捕捉设置"><svg class="caret"><use href="#caret"/></svg></button></div>
<div class="cell"><button aria-label="推断约束"><svg class="i"><path d="M8.500 10V.5h6v6h-6"/><path class="fw" d="M1 10h7v6H1z"/></svg></button></div>
<button class="act" aria-label="动态输入"><svg class="i"><path d="M3.500 1v6M0 4.500h7M6 9.500h10v5H6z"/><path class="fw" d="M8 11h8v3H8z"/></svg></button>
<div class="cell"><button aria-label="正交"><svg class="i"><path d="M.5 0v15.500H16M1 9.500h5v6"/></svg></button><button aria-label="极轴追踪"><svg class="i"><circle cx="7" cy="9" r="6"/><path d="M7 9h9M7 9l7-8"/></svg></button><button class="drop" aria-label="极轴设置"><svg class="caret"><use href="#caret"/></svg></button><button aria-label="等轴测草图"><svg class="i"><path d="M8 0v16" stroke="#4bd383"/><path d="M1 1l13 13" stroke="#ff6a6a"/><path d="M7 7h3v3H7z"/></svg></button><button class="drop" aria-label="等轴测设置"><svg class="caret"><use href="#caret"/></svg></button></div>
<div class="cell"><button aria-label="对象捕捉追踪"><svg class="i"><path d="M13 1L1 14.500h15M6 7h4v3"/></svg></button></div>
<button class="act" aria-label="对象捕捉"><svg class="i"><path d="M.5.500h4v4h-4zM6 2.500h8.500v12h-12V6"/></svg></button>
<div class="cell tight"><button class="drop" aria-label="捕捉设置"><svg class="caret"><use href="#caret"/></svg></button></div>
<div class="cell"><button aria-label="线宽"><svg class="i"><path d="M0 2h16M0 6h8M9 6.500h7M0 10h12M0 14h16" stroke-width="2"/></svg></button></div>
<button class="act" aria-label="透明度"><svg class="i"><path d="M.5.500h15v15H.5z"/><path class="fw" d="M2 2h3v3H2zM8 2h3v3H8zM5 5h3v3H5zM11 5h3v3h-3zM2 8h3v3H2zM8 8h3v3H8zM5 11h3v3H5zM11 11h3v3h-3z"/></svg></button>
<div class="cell"><button aria-label="选择循环"><svg class="i"><path d="M3 0v6M0 3h6M8 3.500h6v2M3.500 8v6h2"/><path class="fg" d="M6 6h10v10H6z"/></svg></button></div>
<div class="cell"><button aria-label="三维对象捕捉"><svg class="i"><path d="M3 9V5l4-4h8v8l-4 4H7M3 5h8v8M11 5l4-4"/><path d="M1 11h4v4H1z" stroke="#ffae7a"/></svg></button><button class="drop" aria-label="三维捕捉设置"><svg class="caret"><use href="#caret"/></svg></button></div>
<button class="act" aria-label="动态 UCS"><svg class="i"><path d="M3.500 2v12H15M1 4l2.500-3L6 4M13 11l3 3-3 2"/><path class="fw" d="M11 1L6 7h4l-1 5 5-6h-3z"/></svg></button>
<div class="cell tight"><button aria-label="选择过滤"><svg class="i"><path d="M2 4h9v10H2zM2 4l3-3h10v9l-4 4M11 4l4-3" stroke-dasharray="4 2"/><path class="fb" d="M0 3h3v3H0zM9 3h3v3H9zM0 12h3v3H0zM9 12h3v3H9z"/></svg></button><button class="drop" aria-label="过滤设置"><svg class="caret"><use href="#caret"/></svg></button></div>
<button class="act" aria-label="小控件"><svg class="i"><circle cx="8" cy="8" r="5"/><path d="M8 0v8L1 13M8 8l7 5M8 0L6 3M8 0l2 3M1 13v-3M1 13h3M15 13v-3M15 13h-3"/></svg></button>
<div class="cell"><button class="drop" aria-label="小控件设置"><svg class="caret"><use href="#caret"/></svg></button></div>
<button class="act" aria-label="注释可见性"><svg class="i"><path class="fw" d="M7 1l3 9 4 6-6-3-6 3 4-6z"/><circle cx="13" cy="3" r="2.500"/></svg></button>
<div class="cell"><button aria-label="自动缩放"><svg class="i"><path class="fw" d="M7 2l3 8 4 6-6-3-6 3 4-6z"/><path d="M14 0l-3 4h4l-3 4"/></svg></button><button aria-label="注释"><svg class="i"><path class="fw" d="M8 1l2 9 4 6-6-3-6 3 4-6z"/></svg></button><button class="txt scale">1:1 / 100%<svg class="caret"><use href="#caret"/></svg></button></div>
<div class="cell"><button aria-label="切换工作空间"><svg class="i"><circle cx="8" cy="8" r="4.500" stroke-width="3"/><path d="M8 0v4M8 12v4M0 8h4M12 8h4M2 2l3 3M11 11l3 3M14 2l-3 3M5 11l-3 3" stroke-width="3"/></svg></button><button class="drop" aria-label="工作空间列表"><svg class="caret"><use href="#caret"/></svg></button></div>
<div class="cell"><button aria-label="注释监视器"><svg class="i"><path d="M8 0v16M0 8h16" stroke-width="2"/></svg></button></div>
<div class="cell"><button aria-label="单位"><svg class="i"><path class="fw" d="M4 0h9v2H9v2h2v2H9v2h2v2H9v2h2v2h2v2H4z"/></svg></button><button class="txt units">小数<svg class="caret"><use href="#caret"/></svg></button></div>
<div class="cell"><button aria-label="快捷特性"><svg class="i"><path d="M2.500.500h12v15h-12z"/><path d="M2 1.500h12M5 5h2M8 5h5M5 8h2M8 8h5M5 11h2M8 11h5M5 14h8" /></svg></button></div>
<div class="cell"><button aria-label="锁定用户界面"><svg class="i"><path d="M7 12.500H.5v-11h13V6M1 3h12"/><path class="fw" d="M8 10h7v6H8z"/><path d="M12.500 10V7.500h3"/></svg></button><button class="drop" aria-label="锁定设置"><svg class="caret"><use href="#caret"/></svg></button></div>
<div class="cell"><button aria-label="隔离对象"><svg class="i"><path d="M.5.500h6v6h-6zM7 9l3 6H4z"/><circle cx="13" cy="7" r="3"/></svg></button></div>
<button class="act" aria-label="图形性能"><svg class="i"><circle cx="8" cy="8" r="7.500" fill="#9cc4ea"/><path d="M6 10l7-7-4 8z"/></svg></button>
<div class="cell"><button aria-label="关联标注"><svg class="i"><path d="M0 0h10l4 4v7H0z" fill="#3f8fd0" stroke="none"/><path d="M3 1v6h10M0 4h6" stroke="#cfe6fa"/><path d="M0 8h7v6H0z" fill="#ffb400" stroke="none"/><path d="M7 11l3 4 6-7" stroke="#3fbf4f" stroke-width="3"/></svg></button></div>
<div class="cell"><button aria-label="全屏显示"><svg class="i"><path d="M.5 2.500h15v11H.5zM9 7l4-2M10 5h3v2M6 9l-3 2M3 9v2h3"/></svg></button><button aria-label="自定义"><svg class="i"><path d="M0 2h16M0 8h16M0 14h16" stroke-width="2"/></svg></button></div>
</div>
</footer>
</body>
</html>
```
FILE: styles.css
```css
* { box-sizing: border-box; }

body {
  margin: 0;
  min-height: 100vh;
  display: flex;
  flex-direction: column;
  border: 1px solid #0f95dc;
  background: #222933;
  color: #dcdcdc;
  font: 12px/16px "Noto Sans", "Noto Sans CJK SC", sans-serif;
}

.defs { position: absolute; }
svg { display: block; flex: none; fill: none; stroke: #dcdcdc; width: 13px; height: 13px; overflow: visible; }
svg.i { width: 16px; height: 16px; }
.fw { fill: #dcdcdc; stroke: none; }
.fb { fill: #8ccaff; stroke: none; }
.fy { fill: #ffd27a; stroke: none; }
.fo { fill: #d9a566; stroke: none; }
.fr { fill: #ff6464; stroke: none; }
.fg { fill: #82dca0; stroke: none; }
.dk { fill: #3b4453; stroke: none; }
.b { stroke: #6cbfff; }

button {
  display: flex;
  align-items: center;
  justify-content: center;
  flex: none;
  padding: 0;
  border: 0;
  background: none;
  color: inherit;
  font: inherit;
}
select, input { font: inherit; border: 0; min-width: 0; outline: 0; }
a { color: inherit; text-decoration: none; }
svg.caret { width: 7px; height: 4px; }

/* title row */
.titlebar { display: flex; align-items: center; justify-content: space-between; height: 28px; }
.quick { display: flex; align-items: center; padding-left: 8px; }
.quick button { width: 24px; height: 24px; }
.quick .logo { width: 41px; gap: 5px; justify-content: flex-start; }
.quick .drop { width: 12px; }
.quick .custom { width: 14px; }
.quick .dim { opacity: .35; }
.quick svg.more { width: 9px; height: 8px; }
.quick .share { width: auto; gap: 4px; margin-left: 7px; color: #8ccaff; }
h1 { margin: 0; display: flex; gap: 10px; font-size: 12px; font-weight: 400; color: #e6e6e6; white-space: nowrap; }
h1 .app { font-size: 13px; }
.account { display: flex; align-items: center; padding-right: 3px; }
.account button { width: 24px; height: 24px; }
.account .play { width: 5px; height: 8px; margin-right: 5px; }
.account input { width: 178px; height: 20px; padding: 0 3px; background: #464f61; font-style: italic; color: #b8bcc4; }
input::placeholder { color: inherit; opacity: 1; }
.account .user { width: auto; gap: 6px; margin: 0 5px 0 4px; }
.account .cart { width: 22px; }
.account .wide { width: 40px; gap: 5px; }
.account .rule { width: 1px; height: 18px; background: #4a5260; margin: 0 3px; }
.help { width: 16px; height: 16px; border-radius: 8px; background: #dcdcdc; color: #3b4453; font-weight: 700; text-align: center; }
.winctl { display: flex; margin-left: 56px; }
.winctl button { width: 25px; }

/* menu */
.menubar { display: flex; align-items: center; gap: 25px; height: 21px; padding: 0 4px 0 17px; border-bottom: 1px solid #3b4453; color: #b9bcc2; white-space: nowrap; }
.docctl { display: flex; margin-left: auto; }
.docctl button { width: 18px; }

/* drawing tabs */
.filetabs { display: flex; align-items: flex-end; height: 24px; padding-left: 20px; }
.tab { display: flex; align-items: center; height: 22px; width: 140px; padding-left: 9px; background: #2d3440; border-radius: 8px 8px 0 0; color: #b9bcc2; }
.tab.start { width: 129px; padding-left: 15px; }
.tab.on { width: 136px; padding-left: 10px; background: #3b4453; color: #fff; font-weight: 700; }
.tab .close { margin-left: auto; margin-right: 12px; }
.tab.on .close { margin-right: 18px; }
.tab svg, .add svg { width: 9px; height: 9px; stroke: #a0a4aa; }
.add { width: 22px; height: 16px; margin: 0 0 3px 1px; background: #2d3440; border-radius: 4px 8px 8px 8px; }

/* toolbars */
.bars { background: #3b4453; border-left: 3px solid #222933; border-right: 3px solid #222933; padding: 4px 0; display: flex; flex-direction: column; gap: 3px; }
.barrow { display: flex; gap: 1px; height: 24px; }
.barrow.second { padding-left: 78px; gap: 3px; }
.bar { display: flex; align-items: center; border: 1px solid #262d38; }
.bar.grow { margin-right: 6px; }
.bar button { width: 23px; height: 20px; }
.bar .drop { width: 13px; }
.grip { flex: none; width: 3px; height: 14px; margin: 0 1px 0 3px; }
.grip, .hgrip {
  background:
    repeating-linear-gradient(transparent 0 1px, #3b4453 1px 2px),
    repeating-linear-gradient(90deg, #b0b4bc 0 1px, #3b4453 1px 2px);
}
.sep { flex: none; width: 2px; height: 20px; margin: 0 2px; background: #c8c8c8; border-left: 1px solid #000; }
.combo { display: flex; align-items: center; height: 22px; padding: 0 2px 0 4px; background: #fff; border: 1px solid #c8ccd2; }
.combo select { flex: 1; appearance: none; background: none; color: #000; padding: 0; }
.combo .cv { width: 10px; height: 6px; }
.layer { width: 301px; }
.layer svg.lay { width: 90px; height: 16px; margin-right: 4px; }
.layer .lay * { fill: none; stroke: none; }
.layer .lay [fill] { fill: #ffa800; }
.layer .lay [fill="#888"] { fill: #888; }
.layer .lay [fill="#fff"] { fill: #fff; }
.layer .lay [stroke="#ffa800"], .layer .lay [stroke="#e09600"] { stroke: #f0a000; }
.layer .lay [stroke="#555"] { stroke: #555; }
.layer .lay [stroke="#000"] { stroke: #000; }
.c1 { width: 150px; padding-left: 1px; }
.c1 .sw { width: 14px; height: 16px; margin-right: 5px; }
.c2 { width: 160px; }
.ln { width: 60px; height: 16px; margin-right: 5px; }
.ln.short { width: 35px; }
.c3 { width: 125px; }
.c4 { width: 120px; padding-left: 10px; }
.off { background: #f4f4f4; }
.off select { color: #8a8a8a; opacity: 1; }
.off .cv { opacity: .4; }
.std { width: 120px; padding-left: 18px; font-size: 13px; }

/* work area */
main { flex: 1; display: flex; padding: 0 3px; }
.side { width: 29px; flex: none; background: #3b4453; }
.side.right { width: 32px; padding-left: 4px; }
.vbar { width: 24px; border: 1px solid #262d38; display: flex; flex-direction: column; align-items: center; }
.vbar button { width: 22px; height: 22px; }
.hgrip { width: 13px; height: 3px; margin: 3px 0 2px; }
.canvas { flex: 1; min-width: 0; position: relative; background: #000; border-bottom: 2px solid #0ff; min-height: 600px; overflow: hidden; }
svg.drawing { position: absolute; inset: 0; width: 100%; height: 100%; overflow: hidden; }
svg.s1 { width: 420px; height: 380px; }
svg.s2 { width: 560px; height: 300px; }
svg.s3 { width: 685px; height: 280px; }
svg.s4 { width: 125px; height: 190px; }
.sheet path, .sheet ellipse { vector-effect: non-scaling-stroke; }
.sheet > path:not([class]):not([stroke]) { stroke: none; }
.red { stroke: #e00000; stroke-dasharray: 58 7 2 7; shape-rendering: crispEdges; }
.yl { stroke: #d8d800; }
.crisp { shape-rendering: crispEdges; }
.g { stroke: #00d040; }
.g2, .lg { stroke: #00e000; }
.br { stroke: #c89010; }
.ys { stroke: #ff0; }
.gy { stroke: #808080; }
.bl { stroke: #00f; }
.cy { stroke: #0a9cd8; }
.rd { stroke: #f00; stroke-width: 2px; }
.rd.thin { stroke-width: 1px; }
.white { stroke: #fff; shape-rendering: crispEdges; }
.lt { fill: #00e400; stroke: none; }
.dg { font: 300 16px "Liberation Sans Narrow", Roboto, sans-serif; }
.nd { font: 300 13px "Liberation Sans Narrow", Roboto, sans-serif; }
.cn { font: 10px "Liberation Sans", "Noto Sans CJK SC", sans-serif; }
.wt { font: 300 15px Roboto, "Noto Sans CJK SC", sans-serif; fill: #fff; }
.wb { font-size: 12px; font-weight: 700; }
.note { font: 300 17px "Noto Sans CJK SC", sans-serif; fill: #e8e8e8; }
.lbl { font: 17px "Noto Sans CJK SC", sans-serif; fill: #fff; }
.axis { font: 300 19px Roboto, sans-serif; }
.cubeview text { font: 18px "Noto Sans CJK SC", sans-serif; fill: #a8a8a8; stroke: none; }
.cubeview text.top { font-size: 28px; font-weight: 400; fill: #484a4e; }
.cubeview text.wcs { font: 12px "Noto Sans", sans-serif; fill: #3a3a40; }

/* command window */
.command { position: absolute; left: 245px; right: 243px; bottom: -2px; }
.history { list-style: none; margin: 0 0 2px 61px; padding: 0; display: flex; flex-direction: column; align-items: flex-start; gap: 4px; font: 12px/16px "Liberation Mono", "Noto Sans CJK SC", monospace; }
.history li { padding: 0 1px 0 2px; border-radius: 2px; white-space: pre; }
.history b { font-weight: 400; font-size: 13px; line-height: 1; }
.h1 { background: #4a4a4a; color: #b0b0b0; }
.h2 { background: #525252; color: #cacaca; }
.h3 { background: #5e5e5e; color: #f4f4f4; }
.cmdline { display: flex; height: 26px; border: 1px solid #222933; border-bottom: 2px solid #a0ecec; border-radius: 3px 3px 0 0; overflow: hidden; }
.cmdtools { display: flex; align-items: center; gap: 2px; width: 55px; padding-left: 3px; background: #222933; }
.cmdtools .dots { width: 8px; height: 19px; }
.cmdtools button svg:not(.i) { width: 10px; height: 10px; }
.cmdtools .i { margin-left: 8px; }
.cmdinput { flex: 1; display: flex; align-items: center; padding: 0 3px; background: #b0b0b0; }
.cmdinput .prompt { width: 27px; height: 12px; }
.cmdinput input { flex: 1; padding: 0 5px; background: none; font-size: 13px; font-style: italic; color: #555; }
.cmdinput .up { width: 7px; height: 4px; }

/* bottom row */
footer { display: flex; justify-content: space-between; height: 32px; padding: 0 5px 0 13px; }
.layouts { display: flex; align-items: flex-start; padding-top: 1px; }
.layouts button { height: 17px; padding: 0 10px 0 12px; background: #2d3440; color: #a8abb2; border-radius: 0 0 8px 8px; }
.layouts .on { width: 49px; background: #3b4453; color: #fff; font-weight: 700; }
.layouts .plus { width: 20px; margin-left: 7px; padding: 0; }
.layouts svg { width: 9px; height: 9px; }
.status { display: flex; gap: 2px; padding-top: 3px; }
.cell { display: flex; align-items: center; height: 24px; background: #3b4453; color: #f0f0f0; }
.cell button { width: 24px; height: 24px; }
.cell .drop { width: 16px; }
.cell.tight .drop { width: 14px; }
.cell .txt { width: auto; padding: 0 3px; }
.cell .scale { gap: 4px; padding: 0 5px 0 3px; }
.cell .units { width: 74px; justify-content: space-between; padding: 0 5px; }
.coord { width: 140px; justify-content: flex-end; padding-right: 5px; }
.act { width: 22px; height: 22px; margin-top: 1px; background: #5b8fc6; }
.act svg, .act .fw { stroke: #fff; }
.act .fw { fill: #fff; stroke: none; }
```
